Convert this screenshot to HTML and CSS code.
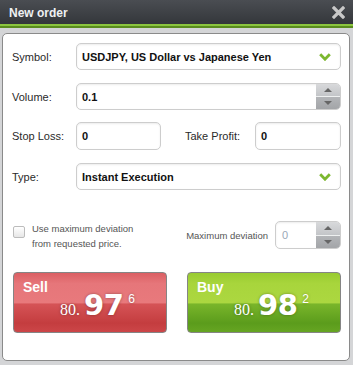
FILE: index.html
```html
<!DOCTYPE html>
<html>
<head>
<meta charset="utf-8">
<link rel="stylesheet" href="styles.css">
</head>
<body>
<div class="titlebar">
  <span class="title">New order</span>
  <svg class="close" width="13" height="13" viewBox="0 0 13 13"><path d="M2 2 L11 11 M11 2 L2 11" stroke="#c8c8c8" stroke-width="3.2" stroke-linecap="square"/></svg>
</div>
<div class="panel">
  <div class="row r1">
    <span class="lbl">Symbol:</span>
    <div class="field">
      <span class="val">USDJPY, US Dollar vs Japanese Yen</span>
      <svg class="chev" width="12" height="8" viewBox="0 0 12 8"><path d="M1.2 1.2 L6 6.2 L10.8 1.2" fill="none" stroke="#7cb82f" stroke-width="2.8"/></svg>
    </div>
  </div>
  <div class="row r2">
    <span class="lbl">Volume:</span>
    <div class="field">
      <span class="val">0.1</span>
      <div class="spinner"><span class="up"></span><span class="down"></span></div>
    </div>
  </div>
  <div class="row r3">
    <span class="lbl">Stop Loss:</span>
    <div class="field small"><span class="val">0</span></div>
    <span class="lbl tp">Take Profit:</span>
    <div class="field small tpf"><span class="val">0</span></div>
  </div>
  <div class="row r4">
    <span class="lbl">Type:</span>
    <div class="field">
      <span class="val">Instant Execution</span>
      <svg class="chev" width="12" height="8" viewBox="0 0 12 8"><path d="M1.2 1.2 L6 6.2 L10.8 1.2" fill="none" stroke="#7cb82f" stroke-width="2.8"/></svg>
    </div>
  </div>
  <div class="dev">
    <span class="check"></span>
    <span class="devtext">Use maximum deviation<br>from requested price.</span>
    <span class="devlbl">Maximum deviation</span>
    <div class="field devf">
      <span class="val dis">0</span>
      <div class="spinner"><span class="up"></span><span class="down"></span></div>
    </div>
  </div>
  <div class="buttons">
    <div class="btn sell">
      <span class="bname">Sell</span>
      <div class="price"><span class="pre">80.</span><span class="big">97</span><span class="sup">6</span></div>
    </div>
    <div class="btn buy">
      <span class="bname">Buy</span>
      <div class="price"><span class="pre">80.</span><span class="big">98</span><span class="sup">2</span></div>
    </div>
  </div>
</div>
</body>
</html>
```
FILE: styles.css
```css
* { box-sizing: border-box; }
html, body { margin: 0; padding: 0; }
body {
  width: 353px;
  height: 365px;
  background: #d4d5d7;
  font-family: "Liberation Sans", Arial, sans-serif;
  overflow: hidden;
}
.titlebar {
  height: 28px;
  background: linear-gradient(#4a4d52 0, #34373b 24px, #8cc63f 24px, #8cc63f 26px, #5a8c1e 26px, #5a8c1e 28px);
  display: flex;
  align-items: center;
  padding: 0 8px 0 9px;
}
.title {
  color: #eef0f2;
  font-weight: bold;
  font-size: 12px;
  margin-top: -3px;
  flex: 1;
}
.close { margin-top: -4px; }
.panel {
  margin: 5px 3px 0 2px;
  height: 328px;
  background: #fff;
  border: 1px solid #8a8a8a;
  border-radius: 5px;
  padding: 9px 8px 0 9px;
}
.row {
  display: flex;
  align-items: center;
  height: 27px;
}
.r2 { margin-top: 13px; }
.r3 { margin-top: 12px; height: 28px; }
.r4 { margin-top: 13px; }
.lbl {
  width: 64px;
  font-size: 11px;
  color: #2a2a2a;
}
.field {
  flex: 1;
  height: 100%;
  border: 1px solid #cdcdcd;
  border-radius: 5px;
  box-shadow: inset 0 1px 2px rgba(0,0,0,0.08);
  display: flex;
  align-items: center;
  padding-left: 5px;
  background: #fff;
  overflow: hidden;
}
.val {
  flex: 1;
  font-size: 11px;
  font-weight: bold;
  color: #111;
}
.chev { margin-right: 9px; }
.spinner {
  width: 24px;
  height: 100%;
  display: flex;
  flex-direction: column;
}
.spinner span {
  flex: 1;
  display: flex;
  align-items: center;
  justify-content: center;
}
.spinner .up {
  background: linear-gradient(#d8d9db, #c3c5c8);
  border-bottom: 1px solid #eef0f0;
}
.spinner .down { background: linear-gradient(#b3b5b8, #a3a5a8); }
.spinner .up::before {
  content: "";
  border-left: 4px solid transparent;
  border-right: 4px solid transparent;
  border-bottom: 4px solid #666;
}
.spinner .down::before {
  content: "";
  border-left: 4px solid transparent;
  border-right: 4px solid transparent;
  border-top: 4px solid #666;
}
.field.small { flex: 0 0 85px; }
.tp { width: auto; flex: 1; padding-left: 24px; }
.field.tpf { flex: 0 0 86px; }
.dev {
  margin-top: 31px;
  height: 28px;
  display: flex;
  align-items: flex-start;
}
.check {
  width: 12px;
  height: 12px;
  margin: 5px 0 0 1px;
  border: 1px solid #bcbcbc;
  border-radius: 2px;
  background: linear-gradient(#fff, #e6e6e6);
}
.devtext {
  margin-left: 7px;
  font-size: 9.5px;
  line-height: 15px;
  color: #555;
}
.devlbl {
  margin-left: auto;
  align-self: center;
  font-size: 9.5px;
  color: #555;
  margin-right: 7px;
}
.field.devf { flex: 0 0 66px; padding-left: 6px; }
.val.dis { font-weight: normal; color: #9aa8b8; font-size: 11px; }
.buttons {
  margin-top: 23px;
  padding-left: 1px;
  display: flex;
  gap: 20px;
}
.btn {
  width: 154px;
  height: 61px;
  border: 1px solid #858585;
  border-radius: 4px;
  color: #fff;
  padding: 6px 0 0 9px;
  display: flex;
  flex-direction: column;
}
.sell {
  background: linear-gradient(#db5f63 0%, #e6767a 18%, #e8797c 50%, #d55356 53%, #c43d3f 85%, #cc4648 100%);
}
.buy {
  background: linear-gradient(#98cb30 0%, #a8d53c 18%, #acd740 50%, #79b52a 53%, #5b9c1c 85%, #66a522 100%);
}
.bname {
  font-size: 14px;
  font-weight: bold;
  line-height: 16px;
}
.price {
  display: flex;
  align-items: baseline;
  padding-left: 37px;
  margin-top: -4px;
  line-height: 29px;
  text-shadow: 0 0 3px rgba(0,0,0,0.35);
}
.pre {
  font-family: "Liberation Serif", "Times New Roman", serif;
  font-size: 16px;
  margin-right: 4px;
}
.big {
  font-family: "DejaVu Sans", Verdana, sans-serif;
  font-weight: bold;
  font-size: 29px;
  letter-spacing: -0.5px;
}
.sup {
  font-size: 12px;
  margin-left: 5px;
  position: relative;
  top: -12px;
}
```
